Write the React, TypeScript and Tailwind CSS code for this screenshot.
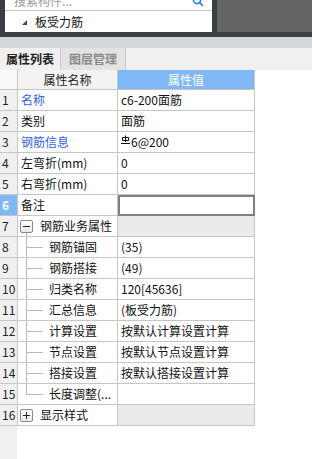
import React from "react";

const FONT = { fontFamily: '"Noto Sans CJK SC", "Noto Sans", sans-serif' };

type Row = {
  n: number;
  name: string;
  value?: React.ReactNode;
  blue?: boolean;
  kind?: "plain" | "group" | "child" | "lastchild";
  open?: boolean;
  selected?: boolean;
};

const RebarGlyph = () => (
  <svg width="9" height="10" viewBox="0 0 9 10" className="mr-[1px] -mt-[4px]" fill="none" stroke="#111" strokeWidth="1">
    <path d="M4.5 0.5 V7" />
    <path d="M1.5 2.5 H7.5 V5.5 H1.5 Z" />
    <path d="M0 8.5 H9" />
  </svg>
);

const rows: Row[] = [
  { n: 1, name: "名称", value: "c6-200面筋", blue: true },
  { n: 2, name: "类别", value: "面筋" },
  {
    n: 3,
    name: "钢筋信息",
    blue: true,
    value: (
      <span className="flex items-center">
        <RebarGlyph />
        6@200
      </span>
    ),
  },
  { n: 4, name: "左弯折(mm)", value: "0" },
  { n: 5, name: "右弯折(mm)", value: "0" },
  { n: 6, name: "备注", value: "", selected: true },
  { n: 7, name: "钢筋业务属性", kind: "group", open: true },
  { n: 8, name: "钢筋锚固", value: "(35)", kind: "child" },
  { n: 9, name: "钢筋搭接", value: "(49)", kind: "child" },
  { n: 10, name: "归类名称", value: "120[45636]", kind: "child" },
  { n: 11, name: "汇总信息", value: "(板受力筋)", kind: "child" },
  { n: 12, name: "计算设置", value: "按默认计算设置计算", kind: "child" },
  { n: 13, name: "节点设置", value: "按默认节点设置计算", kind: "child" },
  { n: 14, name: "搭接设置", value: "按默认搭接设置计算", kind: "child" },
  { n: 15, name: "长度调整(...", value: "", kind: "lastchild" },
  { n: 16, name: "显示样式", kind: "group", open: false },
];

const Box = ({ open }: { open: boolean }) => (
  <div className="w-[13px] h-[13px] rounded-[2px] border border-[#8a8a8a] bg-gradient-to-b from-white to-[#e8e8e8] flex items-center justify-center">
    <div className="relative w-[7px] h-[7px] flex items-center justify-center">
      <div className="w-[7px] h-px bg-[#222]" />
      {!open && <div className="absolute left-[3px] top-0 w-px h-[7px] bg-[#222]" />}
    </div>
  </div>
);

function NameCell({ r }: { r: Row }) {
  if (r.kind === "group") {
    return (
      <div className="flex items-stretch h-full">
        <div className="w-[15px] ml-[1px] flex flex-col items-center">
          <div className="flex-1" />
          <Box open={!!r.open} />
          <div className={"flex-1 w-px " + (r.open ? "bg-[#b8b8b8]" : "")} />
        </div>
        <span className="ml-[6px] self-center text-[#111]">{r.name}</span>
      </div>
    );
  }
  if (r.kind === "child" || r.kind === "lastchild") {
    return (
      <div className="flex items-stretch h-full">
        <div className="w-[8px]" />
        {r.kind === "child" ? (
          <div className="w-[17px] border-l border-[#b8b8b8] flex items-center">
            <div className="h-px w-full bg-[#b8b8b8]" />
          </div>
        ) : (
          <div className="w-[17px] h-[11px] border-l border-b border-[#b8b8b8]" />
        )}
        <span className="ml-[6px] self-center text-[#111] whitespace-nowrap">{r.name}</span>
      </div>
    );
  }
  return (
    <div className="flex items-center h-full pl-[3px]">
      <span className={r.blue ? "text-[#2f62e6]" : "text-[#111]"}>{r.name}</span>
    </div>
  );
}

export default function App() {
  return (
    <div className="w-[312px] h-[459px] overflow-hidden bg-white text-[12px] flex flex-col" style={FONT}>
      {/* top dark area with component tree panel */}
      <div className="h-[32px] flex bg-[#3b3f43]">
        <div className="ml-[5px] w-[207px] bg-white flex flex-col">
          <div className="h-[11px] border-b border-[#c8c8c8] overflow-hidden flex items-start">
            <span className="ml-[9px] -mt-[8px] leading-[17px] text-[#9a9a9a] whitespace-nowrap">搜索构件...</span>
            <div className="flex-1" />
            <svg width="12" height="12" viewBox="0 0 12 12" className="mr-[8px] -mt-[5px]" fill="none" stroke="#2a82d8" strokeWidth="1.6">
              <circle cx="5" cy="5" r="3.6" />
              <path d="M7.6 7.6 L10.5 10.5" strokeLinecap="round" />
            </svg>
          </div>
          <div className="h-[21px] flex items-center">
            <svg width="5" height="5" viewBox="0 0 5 5" className="ml-[17px] mt-[2px]">
              <polygon points="5,0 5,5 0,5" fill="#4a4a4a" />
            </svg>
            <span className="ml-[8px] text-[#111]">板受力筋</span>
          </div>
        </div>
        <div className="w-[5px]" />
        <div className="flex-1 bg-[#656565]" />
      </div>
      <div className="h-[5px] bg-[#3b3f43]" />
      <div className="h-[11px] bg-[#d5d7da]" />
      {/* tabs */}
      <div className="h-[22px] bg-[#f0f0f0] flex">
        <div className="w-[61px] border-r border-[#c9c9c9] flex items-center justify-center font-bold text-[#222]">属性列表</div>
        <div className="w-[65px] border-r border-[#c9c9c9] bg-[#e3e3e3] flex items-center justify-center font-bold text-[#8a8a8a]">图层管理</div>
        <div className="flex-1" />
      </div>
      {/* table */}
      <div className="flex-1 flex flex-col">
        <div className="h-[20px] flex">
          <div className="w-[18px] border-r border-b border-[#c6c6c6] bg-[#fafafa]" />
          <div className="w-[100px] border-r border-b border-[#c6c6c6] bg-[#f3f3f3] flex items-center justify-center text-[#222]">属性名称</div>
          <div className="w-[137px] border-r border-b border-[#c6c6c6] bg-[#80b8f5] flex items-center justify-center text-white">属性值</div>
          <div className="flex-1" />
        </div>
        {rows.map((r) => {
          const grayVal = r.kind === "group";
          return (
            <div key={r.n} className="h-[21px] flex">
              <div
                className={
                  "w-[18px] border-r border-b border-[#c6c6c6] flex items-center pl-[2px] " +
                  (r.selected ? "bg-[#80b8f5] text-white font-bold" : "bg-[#f0f0f0] text-[#222]")
                }
              >
                {r.n}
              </div>
              <div className="w-[100px] border-r border-b border-[#c6c6c6] overflow-hidden">
                <NameCell r={r} />
              </div>
              <div
                className={
                  "w-[137px] border-r border-b border-[#c6c6c6] flex items-center pl-[3px] text-[#111] whitespace-nowrap " +
                  (grayVal ? "bg-[#ebebeb] " : "bg-white ") +
                  (r.selected ? "outline-2 outline-[#7f7f7f] -outline-offset-2" : "")
                }
              >
                {r.value}
              </div>
              <div className="flex-1" />
            </div>
          );
        })}
        <div className="flex-1 flex">
          <div className="w-[17px] bg-[#f0f0f0]" />
          <div className="flex-1" />
        </div>
      </div>
    </div>
  );
}
